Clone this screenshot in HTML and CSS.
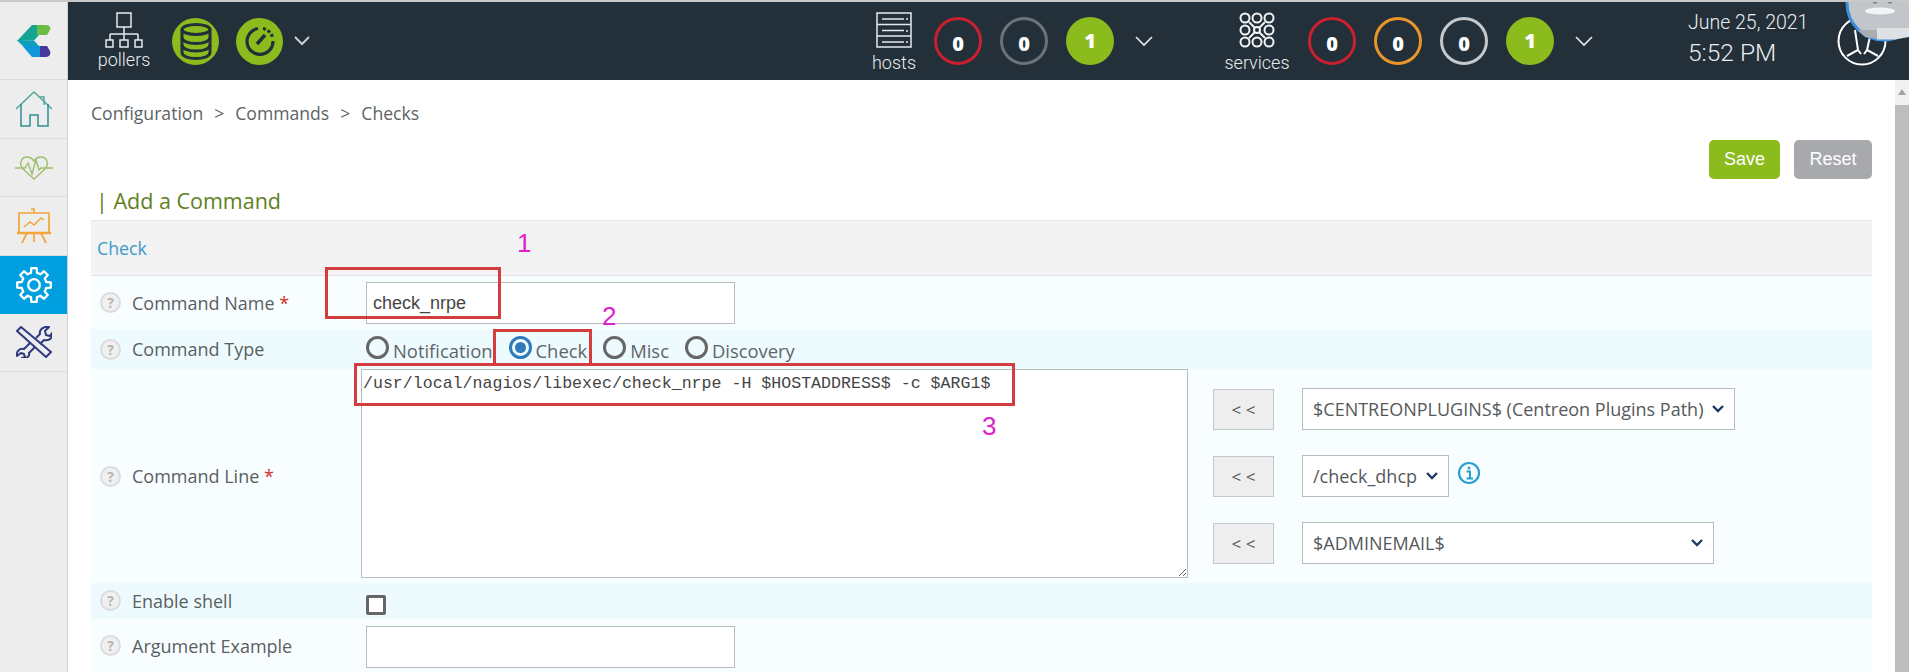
FILE: index.html
```html
<!DOCTYPE html>
<html lang="en">
<head>
<meta charset="utf-8">
<title>Add a Command</title>
<link rel="stylesheet" href="styles.css">
</head>
<body>
<div class="app">
  <aside class="sidebar">
    <div class="side-item logo">
      <svg width="34" height="32" viewBox="0 0 34 32"><path d="M0 16 15 0h7v10l-5 5.500z" fill="#12a594"/><path d="M20 0h9c4 0 5 3 4 5l-3 5H20z" fill="#6cbd45"/><path d="M0 15.500H17L22 21H6z" fill="#0f9fb8"/><path d="M5.500 21H24V32H15z" fill="#1196dc"/><path d="M23 21h7l3 5c1 2 0 6-4 6h-6z" fill="#46379a"/></svg>
    </div>
    <div class="side-item">
      <svg width="38" height="36" viewBox="0 0 38 36" fill="none" stroke-width="1.500"><path d="M1 18 19 1l18 17" stroke="#4fa79c"/><path d="M25 6h4v8" stroke="#4fa79c"/><path d="M6 13v22h9V24h8v11h10V13" stroke="#2c8f93"/></svg>
    </div>
    <div class="side-item">
      <svg width="38" height="25" viewBox="0 0 38 25" fill="none" stroke="#9dbf6b" stroke-width="1.400"><path d="M19 24 8 14C3 8 7 2 12 2c3 0 5 1 7 4 2-3 4-4 7-4 5 0 9 6 4 12z"/><path d="M0 13h10l3-5 4 11 4-14 3 10 2-2h12"/></svg>
    </div>
    <div class="side-item">
      <svg width="34" height="36" viewBox="0 0 34 36" fill="none" stroke="#f2a53b" stroke-width="1.700"><path d="M2 5h30v20H2z"/><path d="M0 25h34" stroke-width="2.400"/><path d="M14 1h3v4"/><path d="M7 19l6-5 4 3 7-7 3 2" stroke-width="1.400"/><path d="M10 25 5 35M24 25l5 10M17 25v9"/></svg>
    </div>
    <div class="side-item active">
      <svg width="36" height="36" viewBox="0 0 36 36" fill="none" stroke="#fff" stroke-width="2.300" stroke-linejoin="round">
        <circle cx="18" cy="18" r="5.800"/>
        <path class="tooth" d="M13.220 6.450 14.980 5.870 15.340 1.210H20.660L21.020 5.870 22.780 6.450"/>
        <path class="tooth t45" d="M13.220 6.450 14.980 5.870 15.340 1.210H20.660L21.020 5.870 22.780 6.450"/>
        <path class="tooth t90" d="M13.220 6.450 14.980 5.870 15.340 1.210H20.660L21.020 5.870 22.780 6.450"/>
        <path class="tooth t135" d="M13.220 6.450 14.980 5.870 15.340 1.210H20.660L21.020 5.870 22.780 6.450"/>
        <path class="tooth t180" d="M13.220 6.450 14.980 5.870 15.340 1.210H20.660L21.020 5.870 22.780 6.450"/>
        <path class="tooth t225" d="M13.220 6.450 14.980 5.870 15.340 1.210H20.660L21.020 5.870 22.780 6.450"/>
        <path class="tooth t270" d="M13.220 6.450 14.980 5.870 15.340 1.210H20.660L21.020 5.870 22.780 6.450"/>
        <path class="tooth t315" d="M13.220 6.450 14.980 5.870 15.340 1.210H20.660L21.020 5.870 22.780 6.450"/>
      </svg>
    </div>
    <div class="side-item">
      <svg width="36" height="32" viewBox="0 0 36 32" fill="none" stroke="#2e3a80" stroke-width="2" stroke-linejoin="round"><path d="M1 5 5 1l30 25-5 5z"/><path d="M20 12l4-4c-1-4 3-8 9-7l-4 4 1 4 4 1 2-3c1 6-4 8-8 7l-4 4"/><path d="M14 17l-6 6c-4-1-8 2-7 7l4-3 3 1 1 3-3 1c5 1 8-2 7-5l6-6"/></svg>
    </div>
  </aside>

  <div class="main">
    <header class="topbar">
      <div class="labeled pollers">
        <svg width="38" height="36" viewBox="0 0 38 36" fill="none" stroke="#e6eaec" stroke-width="1.500"><path d="M12 1h14v14H12zM19 15v7M5 22h28M5 22v6M19 22v6M33 22v6M1 28h7v7H1zM15 28h8v7h-8zM30 28h7v7h-7z"/></svg>
        <span>pollers</span>
      </div>
      <div class="disc db">
        <svg width="32" height="37" viewBox="0 0 32 37" fill="none" stroke="#232f39" stroke-width="3"><ellipse cx="16" cy="6.500" rx="14" ry="5"/><path d="M2 6.500v23c0 3.500 6 6 14 6s14-2.500 14-6v-23"/><path d="M2 14.500c0 3.500 6 6 14 6s14-2.500 14-6M2 22c0 3.500 6 6 14 6s14-2.500 14-6"/></svg>
      </div>
      <div class="disc gauge">
        <svg width="30" height="30" viewBox="0 0 30 30" fill="none" stroke="#232f39" stroke-width="3.200"><path d="M13 2.500A13 13 0 1 0 28 15"/><path d="M18 2.500A13 13 0 0 1 27.500 11" stroke-dasharray="3 2"/><path d="M12 18l8-9" stroke-width="3.600"/></svg>
      </div>
      <svg class="chev chev-first" width="16" height="10" viewBox="0 0 16 10" fill="none" stroke="#c9cfd3" stroke-width="2"><path d="M1 1l7 7 7-7"/></svg>

      <div class="labeled hosts">
        <svg width="36" height="36" viewBox="0 0 36 36" fill="none" stroke="#e6eaec" stroke-width="1.500"><path d="M1 1h34v34H1zM1 12.500h34M1 24h34"/><path d="M6 7h22M6 18.500h22M6 30h22"/><path d="M31 6v2M31 18v2M31 29v2"/></svg>
        <span>hosts</span>
      </div>
      <div class="count ring red"><b>0</b></div>
      <div class="count ring grey"><b>0</b></div>
      <div class="count fill"><b>1</b></div>
      <svg class="chev" width="18" height="11" viewBox="0 0 18 11" fill="none" stroke="#e6eaec" stroke-width="1.600"><path d="M1 1l8 8 8-8"/></svg>

      <div class="labeled services">
        <svg width="36" height="36" viewBox="0 0 36 36" fill="none" stroke="#f2f4f5" stroke-width="2"><circle cx="6" cy="6" r="4.500"/><circle cx="18" cy="6" r="4.500"/><circle cx="30" cy="6" r="4.500"/><circle cx="6" cy="18" r="4.500"/><circle cx="18" cy="18" r="3"/><circle cx="30" cy="18" r="4.500"/><circle cx="6" cy="30" r="4.500"/><circle cx="18" cy="30" r="4.500"/><circle cx="30" cy="30" r="4.500"/><path d="M10 10l6 6M26 10l-6 6M10 26l6-6M26 26l-6-6"/></svg>
        <span>services</span>
      </div>
      <div class="count ring red"><b>0</b></div>
      <div class="count ring orange"><b>0</b></div>
      <div class="count ring light"><b>0</b></div>
      <div class="count fill"><b>1</b></div>
      <svg class="chev" width="18" height="11" viewBox="0 0 18 11" fill="none" stroke="#e6eaec" stroke-width="1.600"><path d="M1 1l8 8 8-8"/></svg>

      <div class="clock"><div class="date">June 25, 2021</div><div class="time">5:52 PM</div></div>
      <div class="user">
        <svg width="50" height="50" viewBox="0 0 50 50" fill="none" stroke="#fff" stroke-width="2"><circle cx="25" cy="25" r="23.500"/><path d="M18 14l3 20-11 6M34 16l-4 18 11 6M21 34l3 4M30 34l-3 4"/></svg>
      </div>
    </header>

    <div class="content">
      <nav class="crumbs"><span>Configuration</span><span>&gt;</span><span>Commands</span><span>&gt;</span><span>Checks</span></nav>
      <div class="actions">
        <button class="btn save">Save</button>
        <button class="btn reset">Reset</button>
      </div>
      <h1 class="title">| Add a Command</h1>
      <div class="tabbar"><a class="tab">Check</a></div>

      <div class="row name">
        <div class="label"><i class="help">?</i>Command Name <em>*</em></div>
        <div class="value"><input class="text" type="text" value="check_nrpe"></div>
      </div>
      <div class="row alt type">
        <div class="label"><i class="help">?</i>Command Type</div>
        <div class="value radios">
          <label class="radio"><i class="dot"></i>Notification</label>
          <label class="radio"><i class="dot on"></i>Check</label>
          <label class="radio"><i class="dot"></i>Misc</label>
          <label class="radio"><i class="dot"></i>Discovery</label>
        </div>
      </div>
      <div class="row line">
        <div class="label"><i class="help">?</i>Command Line <em>*</em></div>
        <div class="value cmd">
          <textarea class="area" spellcheck="false">/usr/local/nagios/libexec/check_nrpe -H $HOSTADDRESS$ -c $ARG1$</textarea>
          <div class="macros">
            <div class="macro"><button class="arrow">&lt; &lt;</button><div class="select wide"><span>$CENTREONPLUGINS$ (Centreon Plugins Path)</span><svg width="12" height="8" viewBox="0 0 12 8" fill="none" stroke="#1e3a66" stroke-width="2.400"><path d="M1 1l5 5 5-5"/></svg></div></div>
            <div class="macro"><button class="arrow">&lt; &lt;</button><div class="select small"><span>/check_dhcp</span><svg width="12" height="8" viewBox="0 0 12 8" fill="none" stroke="#1e3a66" stroke-width="2.400"><path d="M1 1l5 5 5-5"/></svg></div>
              <svg class="info" width="24" height="24" viewBox="0 0 24 24" fill="none"><circle cx="12" cy="12" r="10" stroke="#2b9fd0" stroke-width="2.200"/><circle cx="12" cy="7" r="1.500" fill="#2b9fd0"/><path d="M9.500 10.500H13V17M9.500 17.500h6.500" stroke="#2b9fd0" stroke-width="2"/></svg>
            </div>
            <div class="macro"><button class="arrow">&lt; &lt;</button><div class="select mid"><span>$ADMINEMAIL$</span><svg width="12" height="8" viewBox="0 0 12 8" fill="none" stroke="#1e3a66" stroke-width="2.400"><path d="M1 1l5 5 5-5"/></svg></div></div>
          </div>
        </div>
      </div>
      <div class="row alt shell">
        <div class="label"><i class="help">?</i>Enable shell</div>
        <div class="value"><i class="check"></i></div>
      </div>
      <div class="row example">
        <div class="label"><i class="help">?</i>Argument Example</div>
        <div class="value"><input class="text" type="text"></div>
      </div>
    </div>

    <div class="scrollbar"><div class="scroll-up"></div><div class="scroll-thumb"></div></div>
  </div>

  <i class="mark m1"></i><i class="mark m2"></i><i class="mark m3"></i>
  <span class="num n1">1</span><span class="num n2">2</span><span class="num n3">3</span>

  <div class="bot">
    <svg width="79" height="45" viewBox="0 0 79 45">
      <circle cx="54" cy="3" r="37" fill="#c2c5c9" stroke="#3d8fe0" stroke-width="3"/>
      <ellipse cx="50" cy="11" rx="15" ry="3.500" fill="#f3f4f6"/>
      <circle cx="45" cy="1" r="2.500" fill="#7a8086"/>
      <circle cx="60" cy="1" r="2.500" fill="#7a8086"/>
      <path d="M28 30h19v9l-12-2z" fill="#a9aeb3"/>
      <path d="M47 28h32v9l-14 2.500h-18z" fill="#dfe2e5"/>
    </svg>
  </div>
</div>
</body>
</html>
```
FILE: styles.css
```css
* { box-sizing: border-box; }
html, body { margin: 0; height: 100%; overflow: hidden; background: #fff; }
body { font-family: "Open Sans", "Liberation Sans", sans-serif; color: #5a5a5a; }
.app { position: relative; display: flex; height: 672px; width: 1909px; overflow: hidden; border-top: 2px solid #c9c9c9; }

.sidebar { width: 68px; flex: none; background: #ededed; border-right: 1px solid #cfcfcf; display: flex; flex-direction: column; }
.side-item { height: 58.500px; display: flex; align-items: center; justify-content: center; border-bottom: 1px solid #dcdcdc; }
.side-item.logo { height: 78px; }
.side-item.active { background: #009fdf; border-bottom: none; height: 58px; }
.tooth { transform-origin: 18px 18px; }
.t45 { transform: rotate(45deg); }
.t90 { transform: rotate(90deg); }
.t135 { transform: rotate(135deg); }
.t180 { transform: rotate(180deg); }
.t225 { transform: rotate(225deg); }
.t270 { transform: rotate(270deg); }
.t315 { transform: rotate(315deg); }

.main { flex: 1; min-width: 0; position: relative; display: flex; flex-direction: column; }
.topbar { height: 78px; flex: none; background: #232f39; display: flex; align-items: center; color: #e8ecee; position: relative; font-family: Roboto, sans-serif; font-weight: 300; }
.topbar > * { flex: none; }
.labeled { display: flex; flex-direction: column; align-items: center; font-size: 18px; line-height: 20px; }
.labeled svg { display: block; margin-bottom: 2px; }
.pollers { width: 60px; margin-left: 26px; }
.hosts { width: 60px; margin-left: 554px; margin-top: 3px; }
.services { width: 70px; margin-left: 69px; margin-top: 3px; }
.hosts svg, .services svg { margin-bottom: 5px; }
.disc { width: 47px; height: 47px; border-radius: 50%; background: #8cbb1e; display: flex; align-items: center; justify-content: center; }
.disc.db { margin-left: 18px; }
.disc.gauge { margin-left: 17px; }
.chev-first { margin-left: 11px; }
.count { width: 48px; height: 48px; border-radius: 50%; display: flex; align-items: center; justify-content: center; font-family: "Open Sans", sans-serif; font-size: 20px; color: #fff; }
.count b { font-weight: 800; position: relative; top: 2px; }
.ring { border: 3px solid; }
.fill { background: #8cbb1e; }
.fill b { top: -1px; }
.red { border-color: #c8202f; }
.grey { border-color: #6c7277; }
.orange { border-color: #e9952a; }
.light { border-color: #c6c9cb; }
.hosts + .count { margin-left: 10px; }
.count + .count { margin-left: 18px; }
.fill + .chev { margin-left: 21px; }
.services + .count { margin-left: 16px; }
.clock { margin-left: 95px; margin-top: -2px; width: 122px; white-space: nowrap; }
.date { font-size: 19.500px; line-height: 26px; }
.time { font-size: 24.500px; line-height: 34px; }
.user { width: 50px; height: 50px; margin-left: 27px; }
.user svg { display: block; }

.content { flex: 1; min-height: 0; padding: 0 37px 0 23px; }
.crumbs { display: flex; gap: 11px; height: 25px; margin-top: 21px; font-size: 17.600px; line-height: 25px; color: #5c6366; }
.actions { display: flex; justify-content: flex-end; gap: 14px; margin-top: 14px; height: 39px; }
.btn { border: none; border-radius: 5px; color: #fff; font-family: "Liberation Sans", sans-serif; font-size: 18px; padding: 0; height: 39px; }
.save { width: 71px; background: #8cbb1e; }
.reset { width: 78px; background: #a8a9ad; }
.title { margin: 3px 0 0; padding-left: 5px; height: 38px; font-size: 21.500px; line-height: 37px; font-weight: 400; color: #5f7f1e; }
.tabbar { height: 56px; background: #f3f3f3; border-top: 1px solid #e8e8e8; border-bottom: 1px solid #e2e2e2; display: flex; align-items: center; padding-left: 6px; }
.tab { color: #3d9ac9; font-size: 17.800px; }

.row { display: flex; background: #f8feff; }
.alt { background: #eefbfe; }
.label { width: 270px; flex: none; display: flex; align-items: center; padding-left: 9px; font-size: 18px; white-space: pre; color: #5a5f61; }
.label em { color: #d03030; font-style: normal; }
.help { width: 21px; height: 21px; border-radius: 50%; border: 2px solid #dcdcdc; background: #f0f0f0; color: #b5b5b5; font: 700 14px/17px "Open Sans", sans-serif; text-align: center; margin-right: 11px; flex: none; }
.value { flex: 1; min-width: 0; padding-left: 5px; display: flex; align-items: center; }
.name { height: 53px; }
.type { height: 40px; }
.line { height: 214px; }
.shell { height: 36px; }
.example { height: 53px; }
.text { width: 369px; height: 42px; border: 1px solid #b8bcbf; background: #fff; padding: 0 6px; font-family: "Liberation Sans", sans-serif; font-size: 18px; color: #444; outline: none; }
.name .text { margin-top: 1px; }
.example .text { margin-top: 2px; }
.radios { align-items: flex-start; }
.radio { display: flex; align-items: flex-start; font-size: 18.400px; color: #5f6467; margin-right: 16px; line-height: 24px; padding-top: 10px; }
.dot { width: 23px; height: 23px; border-radius: 50%; border: 3px solid #666; margin: -3px 4px 0 0; position: relative; }
.dot.on { border-color: #2f7ab9; }
.dot.on::after { content: ""; position: absolute; inset: 3px; border-radius: 50%; background: #2f7ab9; }

.cmd { padding-left: 0; align-items: flex-start; }
.area { width: 827px; height: 209px; border: 1px solid #b8bcbf; background: #fff; margin: 0; padding: 4px 1px; font-family: "Liberation Mono", monospace; font-size: 16.600px; line-height: 20px; color: #444; outline: none; resize: both; }
.macros { margin-left: 25px; padding-top: 19px; display: flex; flex-direction: column; gap: 25px; }
.macro { display: flex; align-items: center; height: 42px; }
.arrow { width: 61px; height: 41px; border: 1px solid #c4c7c9; background: #eee; font-size: 17px; color: #555; font-family: "Open Sans", sans-serif; margin: 1px 28px 0 0; padding: 0; }
.select { height: 42px; border: 1px solid #b8bcbf; background: #fff; display: flex; align-items: center; justify-content: space-between; padding: 0 10px; font-size: 18px; color: #55595c; white-space: nowrap; }
.select.wide { width: 433px; }
.select.small { width: 147px; }
.select.mid { width: 412px; }
.info { margin: -6px 0 0 8px; }
.check { width: 20px; height: 20px; border: 3px solid #666; border-radius: 2px; background: #fff; margin: 7px 0 0 0; display: block; }
.shell .label { padding-bottom: 1px; }

.scrollbar { position: absolute; right: 0; top: 78px; width: 14px; bottom: 0; background: #f1f1f1; display: flex; flex-direction: column; align-items: center; }
.scroll-up { height: 25px; flex: none; position: relative; width: 100%; }
.scroll-up::after { content: ""; position: absolute; left: 3px; top: 9px; border: 4px solid transparent; border-top: none; border-bottom: 6px solid #a3a3a3; }
.scroll-thumb { flex: 1; width: 100%; background: #bdbdbd; }

.mark { position: absolute; border: 3px solid #d43c3e; pointer-events: none; }
.m1 { left: 325px; top: 265px; width: 176px; height: 52px; }
.m2 { left: 493px; top: 327px; width: 99px; height: 37px; }
.m3 { left: 354px; top: 361px; width: 661px; height: 43px; }
.num { position: absolute; color: #dd22cc; font-family: "Liberation Sans", sans-serif; font-size: 26px; line-height: 30px; }
.n1 { left: 517px; top: 226px; }
.n2 { left: 602px; top: 299px; }
.n3 { left: 982px; top: 409px; }
.bot { position: absolute; right: 0; top: -2px; width: 79px; height: 45px; }
.bot svg { display: block; }
```
